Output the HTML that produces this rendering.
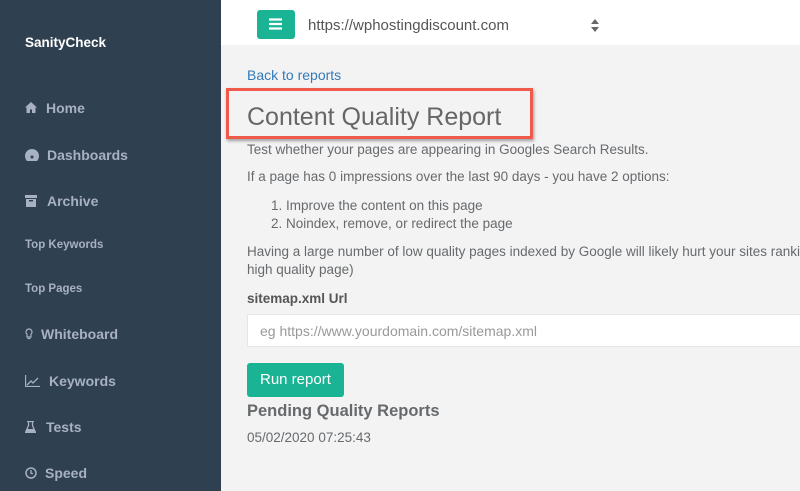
<!DOCTYPE html>
<html><head><style>
*{margin:0;padding:0;box-sizing:border-box}
body{width:800px;height:491px;overflow:hidden;background:#f3f3f4;font-family:"Liberation Sans",sans-serif;position:relative;color:#676a6c}
.sb{position:absolute;left:0;top:0;width:221px;height:491px;background:#2f4050}
.t{position:absolute;white-space:nowrap;line-height:1}
.nav{color:#a7b1c2;font-size:14px;font-weight:bold;left:46px}
.ic{position:absolute;left:25px}
.c{font-size:13.5px;color:#676a6c}
</style></head><body>
<div class="sb"></div>
<div class="t" style="left:25px;top:36px;color:#fff;font-weight:bold;font-size:13.5px">SanityCheck</div>
<svg class="ic" style="top:102px" width="12" height="11" viewBox="0 0 12 11"><path d="M6 0L0 5.5h1.5V11h3.5V7.5h2V11h3.5V5.5H12z" fill="#a7b1c2"/></svg>
<div class="t nav" style="top:101px">Home</div>
<svg class="ic" style="top:149px" width="14" height="12" viewBox="0 0 14 12"><path d="M7 0a7 7 0 0 0-7 7c0 2 1 4 2 5h10c1-1 2-3 2-5a7 7 0 0 0-7-7z" fill="#a7b1c2"/><circle cx="7" cy="8" r="1.5" fill="#2f4050"/></svg>
<div class="t nav" style="top:148px;left:47px">Dashboards</div>
<svg class="ic" style="top:195px" width="12" height="12" viewBox="0 0 12 12"><rect x="0" y="0" width="12" height="3" fill="#a7b1c2"/><rect x="1" y="4" width="10" height="8" fill="#a7b1c2"/><rect x="4" y="5" width="4" height="1.5" fill="#2f4050"/></svg>
<div class="t nav" style="top:194px;left:47px">Archive</div>
<div class="t nav" style="left:25px;top:240px;font-size:11.5px">Top Keywords</div>
<div class="t nav" style="left:25px;top:284px;font-size:11.5px">Top Pages</div>
<svg class="ic" style="top:328px" width="8" height="12" viewBox="0 0 8 12"><path d="M4 1a3 3 0 0 0-2 5.2V9h4V6.2A3 3 0 0 0 4 1zM2.5 10.5h3" fill="none" stroke="#a7b1c2" stroke-width="1.2"/></svg>
<div class="t nav" style="top:327px;left:41px">Whiteboard</div>
<svg class="ic" style="top:375px" width="15" height="12" viewBox="0 0 15 12"><path d="M.5 0v11.5H15M2 10l4-4 2 2 5-5" fill="none" stroke="#a7b1c2" stroke-width="1.3"/></svg>
<div class="t nav" style="top:374px;left:49px">Keywords</div>
<svg class="ic" style="top:421px" width="11" height="12" viewBox="0 0 11 12"><path d="M2 .5h7M3.5 .5v4L.5 11.5h10L7.5 4.5v-4" fill="none" stroke="#a7b1c2" stroke-width="1.3"/><path d="M2 8h7l1.5 3.5H.5z" fill="#a7b1c2"/></svg>
<div class="t nav" style="top:420px">Tests</div>
<svg class="ic" style="top:467px" width="12" height="12" viewBox="0 0 12 12"><circle cx="6" cy="6" r="5" fill="none" stroke="#a7b1c2" stroke-width="1.5"/><path d="M6 3v3.5h2" fill="none" stroke="#a7b1c2" stroke-width="1.3"/></svg>
<div class="t nav" style="top:466px;left:45px">Speed</div>

<div style="position:absolute;left:221px;top:0;width:579px;height:45px;background:#fff"></div>
<div style="position:absolute;left:257px;top:10px;width:38px;height:29px;background:#1ab394;border-radius:3px"></div>
<svg style="position:absolute;left:269px;top:18px" width="13" height="12" viewBox="0 0 13 12"><path d="M0 1.5h13M0 6h13M0 10.5h13" stroke="#fff" stroke-width="2.2"/></svg>
<div class="t" style="left:308px;top:18px;font-size:15px;color:#555">https://wphostingdiscount.com</div>
<svg style="position:absolute;left:591px;top:19px" width="8" height="13" viewBox="0 0 8 13"><path d="M4 0L8 5H0zM4 13L0 8h8z" fill="#666"/></svg>

<div class="t" style="left:247px;top:68px;font-size:14px;color:#337ab7">Back to reports</div>
<div style="position:absolute;left:226px;top:88px;width:307px;height:51px;border:3.5px solid #f05a4a;box-shadow:1px 2px 3px rgba(0,0,0,.35)"></div>
<div class="t" style="left:247px;top:105px;font-size:25px;color:#666">Content Quality Report</div>
<div class="t c" style="left:247px;top:143px">Test whether your pages are appearing in Googles Search Results.</div>
<div class="t c" style="left:247px;top:170px">If a page has 0 impressions over the last 90 days - you have 2 options:</div>
<div class="t c" style="left:271px;top:199px">1. Improve the content on this page</div>
<div class="t c" style="left:271px;top:217px">2. Noindex, remove, or redirect the page</div>
<div class="t c" style="left:247px;top:245px">Having a large number of low quality pages indexed by Google will likely hurt your sites ranking (for</div>
<div class="t c" style="left:247px;top:263px">high quality page)</div>
<div class="t" style="left:247px;top:292px;font-size:13.5px;font-weight:bold;color:#555">sitemap.xml Url</div>
<div style="position:absolute;left:247px;top:314px;width:560px;height:33px;background:#fff;border:1px solid #e5e6e7"></div>
<div class="t" style="left:260px;top:324px;font-size:14px;color:#999">eg https://www.yourdomain.com/sitemap.xml</div>
<div style="position:absolute;left:247px;top:363px;width:97px;height:34px;background:#1ab394;border-radius:3px"></div>
<div class="t" style="left:260px;top:372px;font-size:15px;color:#fff">Run report</div>
<div class="t" style="left:247px;top:403px;font-size:16.5px;font-weight:bold;color:#676a6c">Pending Quality Reports</div>
<div class="t" style="left:247px;top:431px;font-size:13.5px;color:#676a6c">05/02/2020 07:25:43</div>
</body></html>
